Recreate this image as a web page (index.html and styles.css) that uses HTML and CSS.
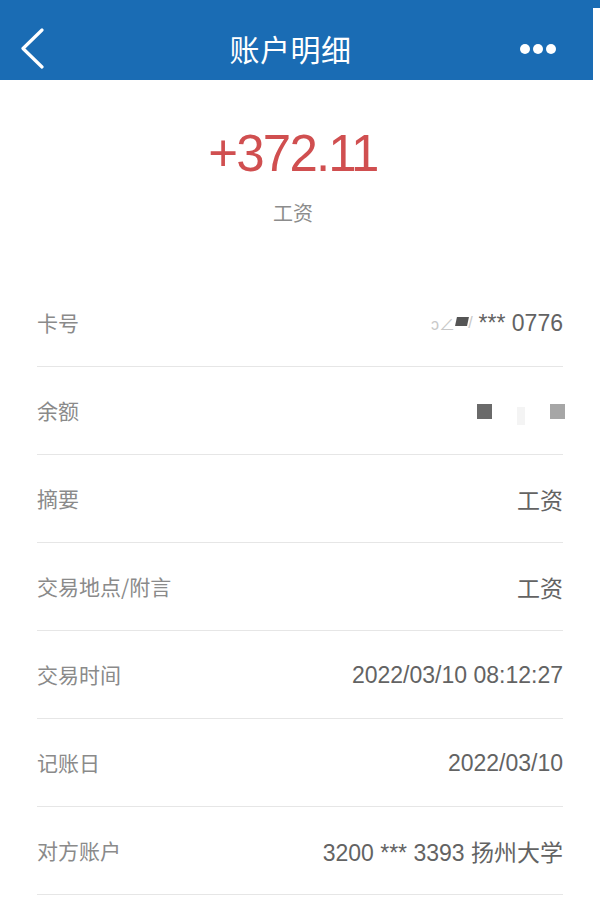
FILE: index.html
```html
<!DOCTYPE html>
<html lang="zh-CN">
<head>
  <meta charset="UTF-8" />
  <meta name="viewport" content="width=device-width, initial-scale=1" />
  <title>账户明细</title>
  <link rel="stylesheet" href="styles.css">
</head>
<body>
  <header class="topBar">
    <button class="backBtn" aria-label="返回">
      <svg width="24" height="42" viewBox="0 0 24 42"><path d="M21 2 L2 20.5 L21 39" fill="none" stroke="#fff" stroke-width="3.2" stroke-linecap="round" stroke-linejoin="round"/></svg>
    </button>
    <h1 class="pageTitle">账户明细</h1>
    <button class="moreBtn" aria-label="更多">
      <span class="dot"></span><span class="dot"></span><span class="dot"></span>
    </button>
  </header>

  <section class="summary">
    <div class="amount">+372.11</div>
    <div class="summaryNote">工资</div>
  </section>

  <ul class="detailList">
    <li class="row">
      <span class="label">卡号</span>
      <span class="value"><span class="masked">ɔ∠<i class="blot"></i>/</span> *** 0776</span>
    </li>
    <li class="row">
      <span class="label">余额</span>
      <span class="value balance"><i class="sq dark"></i><i class="sq faint"></i><i class="sq light"></i></span>
    </li>
    <li class="row">
      <span class="label">摘要</span>
      <span class="value">工资</span>
    </li>
    <li class="row">
      <span class="label">交易地点/附言</span>
      <span class="value">工资</span>
    </li>
    <li class="row">
      <span class="label">交易时间</span>
      <span class="value">2022/03/10 08:12:27</span>
    </li>
    <li class="row">
      <span class="label">记账日</span>
      <span class="value">2022/03/10</span>
    </li>
    <li class="row">
      <span class="label">对方账户</span>
      <span class="value">3200 *** 3393 扬州大学</span>
    </li>
  </ul>
</body>
</html>
```

FILE: styles.css
```css
html, body {
  margin: 0;
  padding: 0;
  background: #fff;
  font-family: "Liberation Sans", "Noto Sans CJK SC", sans-serif;
}

.topBar {
  position: relative;
  height: 80px;
  box-sizing: border-box;
  background: #1a6cb4;
  display: flex;
  align-items: center;
  justify-content: space-between;
  padding: 16px 44px 0 21px;
  color: #fff;
}

/* the screenshot's white edge at the right of the bar */
.topBar::after {
  content: "";
  position: absolute;
  right: 0;
  top: 8px;
  bottom: 0;
  width: 7px;
  background: #fff;
}

.backBtn, .moreBtn {
  background: none;
  border: none;
  padding: 0;
  cursor: pointer;
  display: flex;
  align-items: center;
}

.backBtn svg {
  display: block;
  margin-top: 2px;
}

.pageTitle {
  margin: 0 0 0 16px;
  font-size: 30px;
  font-weight: normal;
  font-family: "Noto Sans CJK SC", sans-serif;
  letter-spacing: 0.5px;
}

.moreBtn {
  gap: 3px;
  margin-top: 2px;
}

.dot {
  width: 10px;
  height: 10px;
  border-radius: 50%;
  background: #fff;
}

.summary {
  height: 199px;
  display: flex;
  flex-direction: column;
  align-items: center;
  box-sizing: border-box;
  padding: 44px 0 0 0;
}

.amount {
  font-size: 51px;
  line-height: 60px;
  letter-spacing: -1.8px;
  color: #d04f50;
  margin-left: -14px;
}

.summaryNote {
  margin-top: 14px;
  margin-left: -14px;
  font-size: 20px;
  color: #8c8c8c;
  font-family: "Noto Sans CJK SC", sans-serif;
}

.detailList {
  list-style: none;
  margin: 0 37px;
  padding: 0;
}

.row {
  height: 88px;
  box-sizing: border-box;
  border-bottom: 1px solid #e6e6e6;
  display: flex;
  align-items: center;
  justify-content: space-between;
  padding-bottom: 2px;
}

.label {
  font-size: 21px;
  color: #8a8a8a;
  font-family: "Noto Sans CJK SC", sans-serif;
}

.value {
  font-size: 23px;
  color: #636363;
  display: flex;
  align-items: center;
  padding-top: 3px;
}

.masked {
  color: #c8c8c8;
  font-size: 16px;
  margin-right: 6px;
  display: inline-flex;
  align-items: center;
}

.blot {
  width: 12px;
  height: 9px;
  background: #555;
  margin: 0 0 4px 1px;
  transform: skewX(-12deg);
}

.sq {
  width: 15px;
  height: 15px;
}

.sq.dark {
  background: #6a6a6a;
  margin-right: 25px;
}

.sq.faint {
  background: #f4f4f4;
  width: 8px;
  height: 18px;
  margin: 10px 25px 0 0;
}

.sq.light {
  background: #a6a6a6;
  margin-right: -2px;
}
```
